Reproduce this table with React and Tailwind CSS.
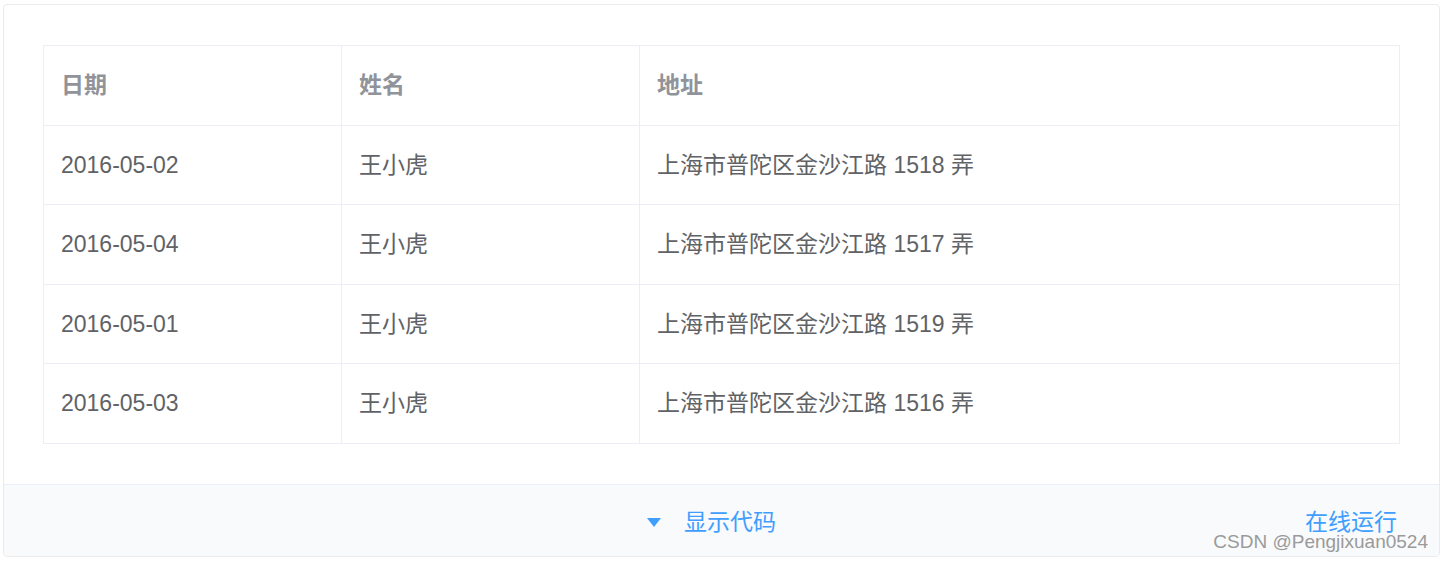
const rows = [
  { date: '2016-05-02', name: '王小虎', addr: '上海市普陀区金沙江路 1518 弄' },
  { date: '2016-05-04', name: '王小虎', addr: '上海市普陀区金沙江路 1517 弄' },
  { date: '2016-05-01', name: '王小虎', addr: '上海市普陀区金沙江路 1519 弄' },
  { date: '2016-05-03', name: '王小虎', addr: '上海市普陀区金沙江路 1516 弄' },
]

const font = { fontFamily: '"Liberation Sans", "Noto Sans CJK SC", sans-serif' }

function Cell({ children, head, last }) {
  return (
    <div
      className={`flex h-[78.5px] items-center pl-[17px] ${last ? '' : 'border-r border-[#ebeef5]'} ${
        head ? 'font-bold text-[#909399]' : 'text-[#606266]'
      }`}
    >
      {children}
    </div>
  )
}

export default function App() {
  return (
    <div className="relative h-[561px] w-[1443px] bg-white pl-[3px] pt-[4px]" style={font}>
      <div className="w-[1437px] overflow-hidden rounded-[4px] border border-[#ebebeb]">
        <div className="px-[39px] py-[40px]">
          <div className="border border-[#ebeef5] text-[23px]">
            <div className="grid grid-cols-[298px_298px_1fr] border-b border-[#ebeef5]">
              <Cell head>日期</Cell>
              <Cell head>姓名</Cell>
              <Cell head last>地址</Cell>
            </div>
            {rows.map((r, i) => (
              <div
                key={i}
                className={`grid grid-cols-[298px_298px_1fr] ${i < rows.length - 1 ? 'border-b border-[#ebeef5]' : ''}`}
              >
                <Cell>{r.date}</Cell>
                <Cell>{r.name}</Cell>
                <Cell last>{r.addr}</Cell>
              </div>
            ))}
          </div>
        </div>
        <div className="relative flex h-[72px] items-center justify-center border-t border-[#eaeefb] bg-[#f9fafc] text-[23px] text-[#409eff]">
          <div className="flex items-center gap-[23px] pt-[4px] pr-[20px]">
            <svg width="14" height="9" viewBox="0 0 14 9">
              <path d="M0 0 H14 L7 9 Z" fill="#409eff" />
            </svg>
            <span>显示代码</span>
          </div>
          <span className="absolute right-[42px] top-[26px] leading-none">在线运行</span>
        </div>
      </div>
      <div className="absolute right-[15px] top-[532px] text-[19px] leading-none text-[#9a9a9a]">CSDN @Pengjixuan0524</div>
    </div>
  )
}
